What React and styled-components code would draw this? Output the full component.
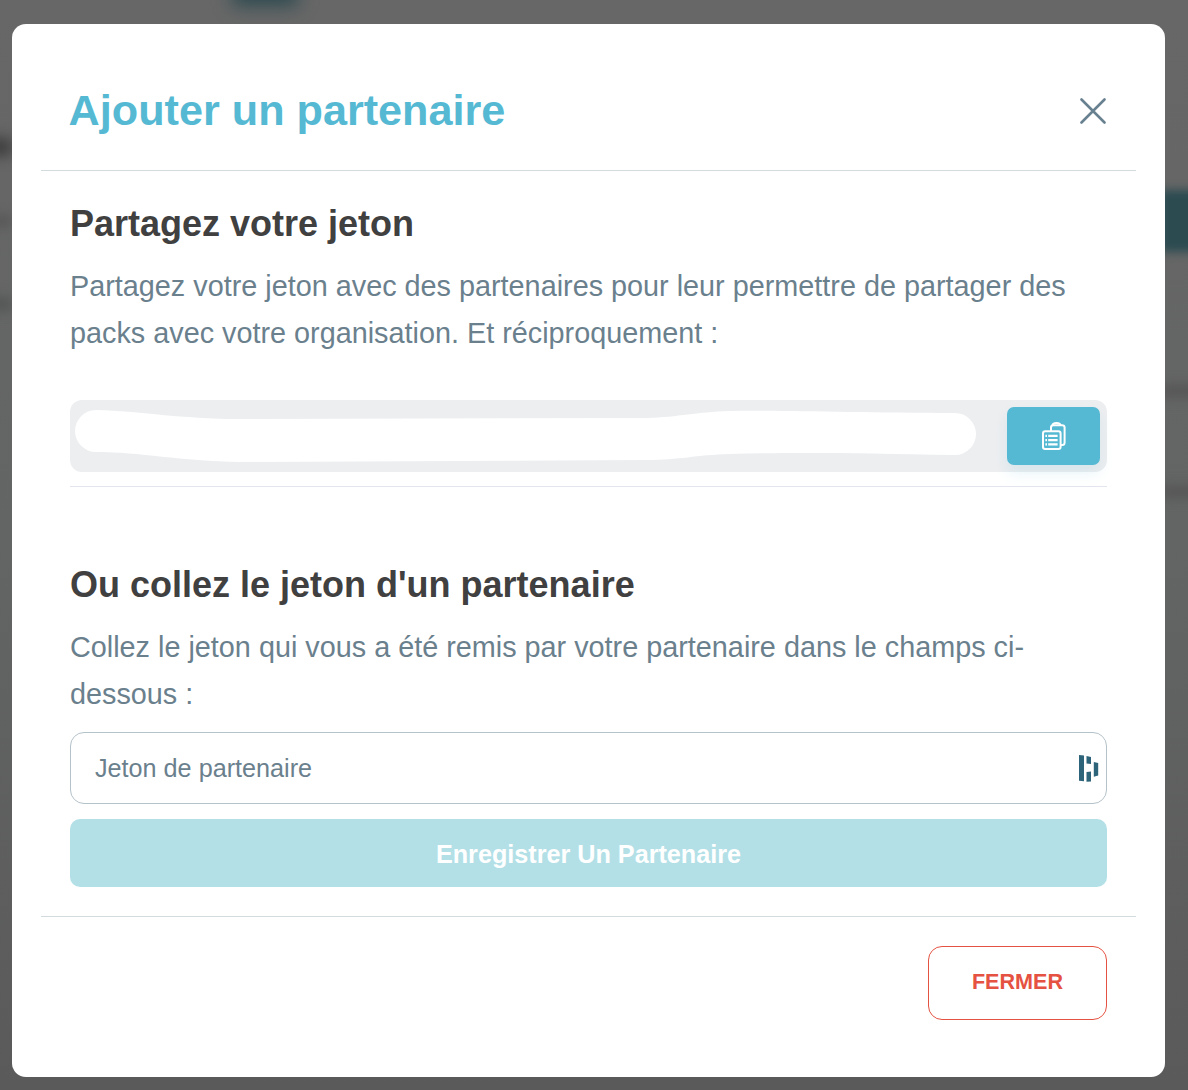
import React from 'react';
import styled, { createGlobalStyle } from 'styled-components';

const GlobalStyle = createGlobalStyle`
  html, body {
    margin: 0;
    padding: 0;
    background: #616161;
  }
  * { box-sizing: border-box; }
`;

// ------------------- Backdrop -------------------
const Backdrop = styled.div`
  position: relative;
  width: 1188px;
  height: 1090px;
  padding: 24px 23px 13px 12px;
  overflow: hidden;
  background: linear-gradient(180deg, #676767 0%, #636464 50%, #5a5a5a 100%);
  font-family: "Liberation Sans", Arial, sans-serif;
`;

const Blur = styled.div`
  position: absolute;
  left: ${(p) => p.$x}px;
  top: ${(p) => p.$y}px;
  width: ${(p) => p.$w}px;
  height: ${(p) => p.$h}px;
  background: ${(p) => p.$color};
  filter: blur(${(p) => p.$blur || 6}px);
`;

// ------------------- Modal -------------------
const Modal = styled.div`
  position: relative;
  display: flex;
  flex-direction: column;
  width: 1153px;
  height: 1053px;
  padding: 0 29px;
  background: #fff;
  border-radius: 14px;
`;

const Header = styled.header`
  display: flex;
  align-items: center;
  justify-content: space-between;
  height: 147px;
  padding: 25px 30px 0 27.6px;
  border-bottom: 1px solid #d3dbde;
`;

const Title = styled.h1`
  margin: 0;
  font-size: 43.2px;
  line-height: 50px;
  font-weight: 700;
  color: #56b9d3;
`;

const CloseButton = styled.button`
  display: flex;
  padding: 2px 0 0;
  border: 0;
  background: none;
`;

const Body = styled.div`
  flex: 1;
  padding: 31px 29px 0;
  border-bottom: 1px solid #d3dbde;
`;

const Heading = styled.h2`
  margin: 0;
  font-size: 36px;
  line-height: 44px;
  font-weight: 700;
  color: #404040;
`;

const Text = styled.p`
  margin: 17px 0 0;
  font-size: 28.8px;
  line-height: 47px;
  color: #6a808d;
`;

const TokenField = styled.div`
  position: relative;
  display: flex;
  justify-content: flex-end;
  height: 72px;
  margin-top: 43px;
  padding: 7px;
  background: #edeef0;
  border-radius: 12px;
`;

const Redaction = styled.svg`
  position: absolute;
  left: 0;
  top: 0;
`;

const CopyButton = styled.button`
  display: flex;
  align-items: center;
  justify-content: center;
  width: 93px;
  height: 58px;
  padding: 0;
  border: 0;
  border-radius: 7px;
  background: #56b9d3;
  box-shadow: 0 8px 14px rgba(86, 185, 211, 0.14);
`;

const Divider = styled.hr`
  height: 1px;
  margin: 14px 0 76px;
  border: 0;
  background: #e2e5ee;
`;

const InputWrap = styled.div`
  position: relative;
  margin-top: 14px;
`;

const Input = styled.input`
  display: block;
  width: 100%;
  height: 72px;
  padding: 1px 24px 0;
  border: 1px solid #b4c2c9;
  border-radius: 14px;
  background: #fff;
  font-family: inherit;
  font-size: 25.2px;
  color: #6a808d;

  &::placeholder {
    color: #6a808d;
    opacity: 1;
  }
`;

const InputIcon = styled.svg`
  position: absolute;
  right: 8px;
  top: 22px;
`;

const SubmitButton = styled.button`
  display: block;
  width: 100%;
  height: 68px;
  margin-top: 15px;
  padding: 2px 0 0;
  border: 0;
  border-radius: 10px;
  background: #b3e0e7;
  font-family: inherit;
  font-size: 25.2px;
  font-weight: 700;
  color: #fff;
`;

const Footer = styled.footer`
  display: flex;
  justify-content: flex-end;
  height: 160px;
  padding: 29px 29px 0 0;
`;

const CloseAction = styled.button`
  width: 179px;
  height: 74px;
  padding: 0 0 2px;
  border: 1px solid #e55241;
  border-radius: 14px;
  background: #fff;
  font-family: inherit;
  font-size: 21.6px;
  font-weight: 700;
  color: #e55241;
`;

// ------------------- Drawings -------------------
const CloseIcon = () => (
  <svg width="26" height="26" viewBox="0 0 26 26" fill="none" stroke="#688190" strokeWidth="2.6" strokeLinecap="round">
    <path d="M1.5 1.5L24.5 24.5M24.5 1.5L1.5 24.5" />
  </svg>
);

const ClipboardIcon = () => (
  <svg width="24" height="28" viewBox="0 0 24 28" fill="none" stroke="#fff" strokeWidth="2" strokeLinejoin="round">
    <path d="M9 9V5.5C9 4 10 3.2 11.5 3.2H20C21.4 3.2 22.6 4.2 22.6 5.6V20.5C22.6 21.9 21.6 23 20.2 23H18.6" />
    <path d="M10.5 3.5C10.5 2 12 1 14.5 1C17 1 18.5 2 18.5 3.5" />
    <path d="M3.2 9.2H16.4C17.6 9.2 18.6 10.1 18.6 11.4V25C18.6 26.2 17.7 27 16.4 27H3.2C2 27 1 26.1 1 25V11.4C1 10.1 2 9.2 3.2 9.2Z" />
    <path d="M6.2 13.8H15.6M6.2 18.1H15.6M6.2 22.4H15.6" strokeWidth="2.2" />
    <path d="M3.4 13.8H5M3.4 18.1H5M3.4 22.4H5" strokeWidth="2.2" />
  </svg>
);

const TokenLogo = () => (
  <InputIcon width="21" height="28" viewBox="0 0 21 28" fill="#2e6479">
    <path d="M1 1L6 1.6V27.2L1 26.8Z" />
    <path d="M8.5 2L13 3V10L8.5 9.5Z" />
    <path d="M8.5 18L13 17.5V27.4L8.5 27.8Z" />
    <path d="M15.8 8L20.2 9V21.6L15.8 22.8Z" />
  </InputIcon>
);

export default function App() {
  return (
    <>
      <GlobalStyle />
      <Backdrop>
        <Blur $x={232} $y={-18} $w={66} $h={24} $color="#2d4a50" $blur={9} />
        <Blur $x={-20} $y={138} $w={32} $h={18} $color="#3d3d3d" $blur={7} />
        <Blur $x={-20} $y={216} $w={32} $h={10} $color="#555" $blur={6} />
        <Blur $x={-20} $y={298} $w={32} $h={12} $color="#525454" $blur={6} />
        <Blur $x={1160} $y={190} $w={50} $h={62} $color="#2b4b51" $blur={5} />
        <Blur $x={1160} $y={385} $w={40} $h={12} $color="#555" $blur={6} />
        <Blur $x={1160} $y={486} $w={40} $h={12} $color="#555" $blur={6} />
        <Modal>
          <Header>
            <Title>Ajouter un partenaire</Title>
            <CloseButton>
              <CloseIcon />
            </CloseButton>
          </Header>
          <Body>
            <Heading>Partagez votre jeton</Heading>
            <Text>
              Partagez votre jeton avec des partenaires pour leur permettre de partager des packs avec votre
              organisation. Et réciproquement :
            </Text>
            <TokenField>
              <Redaction width="920" height="72" viewBox="0 0 920 72">
                <path
                  fill="#fff"
                  d="M26 10C70 11 110 19 170 19L577 18C610 17 625 12 660 11C720 10 790 13 885 13A21 21 0 0 1 885 55C790 53 720 52 660 54C625 55 610 60 577 60L170 62C110 61 70 52 26 52A21 21 0 0 1 26 10Z"
                />
              </Redaction>
              <CopyButton>
                <ClipboardIcon />
              </CopyButton>
            </TokenField>
            <Divider />
            <Heading>Ou collez le jeton d'un partenaire</Heading>
            <Text>
              Collez le jeton qui vous a été remis par votre partenaire dans le champs ci-dessous :
            </Text>
            <InputWrap>
              <Input placeholder="Jeton de partenaire" readOnly />
              <TokenLogo />
            </InputWrap>
            <SubmitButton>Enregistrer Un Partenaire</SubmitButton>
          </Body>
          <Footer>
            <CloseAction>FERMER</CloseAction>
          </Footer>
        </Modal>
      </Backdrop>
    </>
  );
}
